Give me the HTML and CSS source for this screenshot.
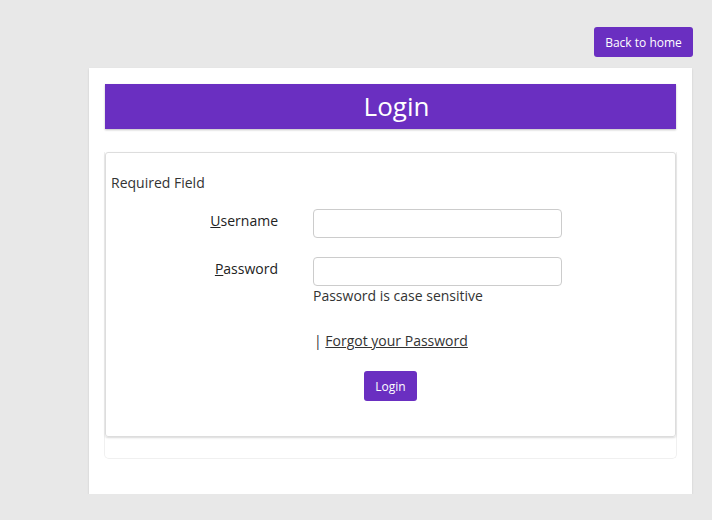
FILE: index.html
```html
<!DOCTYPE html>
<html lang="en">
<head>
    <meta charset="UTF-8">
    <meta name="viewport" content="width=device-width, initial-scale=1.0">
    <title>Login</title>
    <link rel="stylesheet" href="styles.css">
</head>
<body>
    <div class="top-bar">
        <a class="btn" href="#">Back to home</a>
    </div>

    <div class="card">
        <div class="page-title">Login</div>

        <div class="panel-outer">
            <div class="panel">
                <p class="required">Required Field</p>

                <form class="login-form">
                    <label class="form-label" for="user"><u>U</u>sername</label>
                    <div class="form-field">
                        <input type="text" id="user" class="form-input">
                    </div>

                    <label class="form-label" for="pass"><u>P</u>assword</label>
                    <div class="form-field">
                        <input type="password" id="pass" class="form-input">
                        <div class="hint">Password is case sensitive</div>
                    </div>

                    <div></div>
                    <div class="forgot">| <a href="#">Forgot your Password</a></div>
                </form>

                <div class="actions">
                    <button class="btn btn-login" type="button">Login</button>
                </div>
            </div>
        </div>
    </div>
</body>
</html>
```

FILE: styles.css
```css
body {
    margin: 0;
    background-color: #e8e8e8;
    font-family: "Open Sans", "Liberation Sans", sans-serif;
    font-size: 14px;
    line-height: 20px;
    color: #333;
}

.btn {
    display: inline-block;
    box-sizing: border-box;
    height: 30px;
    padding: 1px 0 0;
    border: none;
    border-radius: 3px;
    background-color: #6a2fc1;
    color: #fff;
    font-family: inherit;
    font-size: 12px;
    line-height: 29px;
    text-align: center;
    text-decoration: none;
    cursor: pointer;
}

.top-bar {
    display: flex;
    justify-content: flex-end;
    padding: 27px 19px 11px 0;
}

.top-bar .btn {
    width: 99px;
}

.btn-login {
    width: 53px;
}

.card {
    width: 571px;
    margin-left: 89px;
    padding: 16px 16px 35px;
    background: #fff;
    box-shadow: 0 1px 2px rgba(0, 0, 0, 0.12);
}

.page-title {
    height: 45px;
    padding-left: 12px;
    background-color: #6a2fc1;
    color: #fff;
    font-size: 26px;
    line-height: 45px;
    text-align: center;
    box-shadow: 0 1px 2px rgba(0, 0, 0, 0.25);
}

.panel-outer {
    margin: 23px -1px 0;
    padding-bottom: 21px;
    border: 1px solid #f0f0f0;
    border-top: none;
    border-radius: 0 0 5px 5px;
}

.panel {
    padding: 20px 0 35px;
    border: 1px solid #ddd;
    border-radius: 3px;
    box-shadow: 0 1px 2px rgba(0, 0, 0, 0.15);
}

.required {
    margin: 0 0 16px 5px;
}

.login-form {
    display: grid;
    grid-template-columns: 172px 249px;
    column-gap: 35px;
    row-gap: 19px;
}

.form-label {
    padding-top: 2px;
    text-align: right;
    color: #222;
}

.form-input {
    display: block;
    box-sizing: border-box;
    width: 249px;
    height: 29px;
    border: 1px solid #ccc;
    border-radius: 4px;
    background: #fff;
}

.hint {
    color: #333;
}

.forgot {
    margin-top: 6px;
    padding-left: 1px;
}

.forgot a {
    color: #333;
}

.actions {
    margin-top: 20px;
    text-align: center;
}
```
